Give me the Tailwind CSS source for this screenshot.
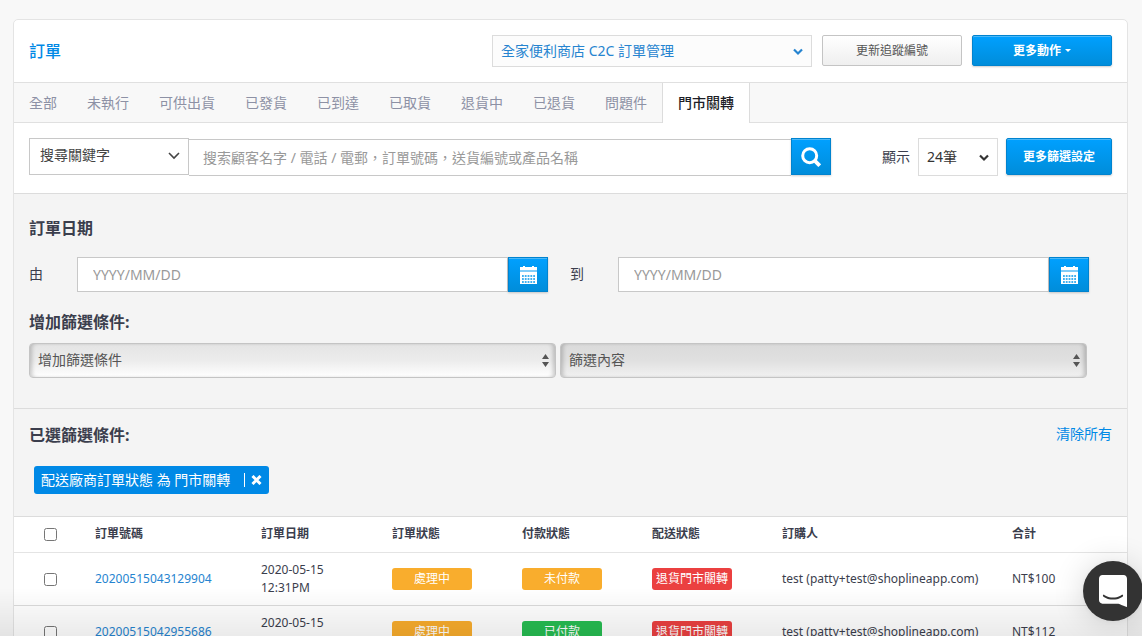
<!DOCTYPE html>
<html lang="zh-Hant">
<head>
  <meta charset="UTF-8" />
  <meta name="viewport" content="width=device-width, initial-scale=1.0"/>
  <title>訂單</title>
  <script src="https://cdn.jsdelivr.net/npm/@tailwindcss/browser@4"></script>
</head>
<body class="h-screen overflow-hidden bg-[#f8f8f8] font-['Noto_Sans','Noto_Sans_CJK_TC',sans-serif] text-sm text-[#3b3e4d]">
  <main class="ml-[13px] mr-[14px] mt-[19px] border border-[#e4e4e4] rounded-t-[5px] bg-white">

    <!-- Title bar -->
    <header class="flex items-start gap-[10px] px-[15px] py-[15px] h-[62px]">
      <h1 class="flex-1 text-base leading-8 font-medium text-[#0089e6]">訂單</h1>
      <div class="relative w-80">
        <select aria-label="訂單管理" class="appearance-none block w-full h-8 pl-2 pr-6 border border-[#dcdcdc] bg-[#fcfcfc] text-[#2684d0]">
          <option>全家便利商店 C2C 訂單管理</option>
        </select>
        <svg class="absolute right-[9px] top-[13px] pointer-events-none" width="10" height="8" viewBox="0 0 10 8" fill="none" stroke="#2684d0" stroke-width="2.2"><path d="M1 1.5 5 5.5 9 1.5"/></svg>
      </div>
      <button class="w-[140px] h-[31px] rounded-xs border border-[#c4c4c4] bg-linear-to-b from-white to-[#efefef] text-xs text-[#555]">更新追蹤編號</button>
      <button class="flex items-center justify-center gap-1 w-[140px] h-[31px] rounded-xs border border-[#0083cf] bg-linear-to-b from-[#00a0ff] to-[#008dda] shadow-[inset_0_1px_0_#4cb8f7,0_1px_2px_#0003] text-xs font-bold text-white">
        更多動作
        <svg width="6" height="3" viewBox="0 0 6 3" fill="#fff"><path d="M0 0h6L3 3z"/></svg>
      </button>
    </header>

    <!-- Status tabs -->
    <nav class="flex h-[41px] border-y border-[#e0e0e0] bg-[#f8f8f8] leading-[39px] text-[#8d91a5]">
      <a href="#" class="px-[15px]">全部</a>
      <a href="#" class="px-[15px]">未執行</a>
      <a href="#" class="px-[15px]">可供出貨</a>
      <a href="#" class="px-[15px]">已發貨</a>
      <a href="#" class="px-[15px]">已到達</a>
      <a href="#" class="px-[15px]">已取貨</a>
      <a href="#" class="px-[15px]">退貨中</a>
      <a href="#" class="px-[15px]">已退貨</a>
      <a href="#" class="px-[15px]">問題件</a>
      <a href="#" class="h-10 px-[15px] border-x border-[#dcdcdc] bg-white font-medium text-[#1c1d26]">門市關轉</a>
    </nav>

    <!-- Search -->
    <div class="flex items-start px-[15px] pt-[15px] h-[71px] border-b border-[#dcdcdc]">
      <div class="relative w-40">
        <select aria-label="搜尋範圍" class="appearance-none block w-full h-[37px] pl-[10px] pb-1 border border-[#c8c8c8] bg-white text-[#444]">
          <option>搜尋關鍵字</option>
        </select>
        <svg class="absolute right-[9px] top-[14px] pointer-events-none" width="12" height="8" viewBox="0 0 12 8" fill="none" stroke="#444" stroke-width="1.6"><path d="M1 1 6 6 11 1"/></svg>
      </div>
      <input type="search" aria-label="搜尋" placeholder="搜索顧客名字 / 電話 / 電郵，訂單號碼，送貨編號或產品名稱" class="flex-1 min-w-0 h-[37px] mt-px px-[14px] border-y border-[#c8c8c8] bg-white placeholder:text-[#999]" />
      <button aria-label="搜尋" class="flex items-center justify-center w-10 h-[37px] border border-[#0083cf] bg-linear-to-b from-[#00a0ff] to-[#008dda] shadow-[inset_0_1px_0_#4cb8f7,0_1px_2px_#0003]">
        <svg width="20" height="20" viewBox="0 0 20 20" fill="none" stroke="#fff" stroke-width="3"><circle cx="8.7" cy="8.7" r="7"/><path d="m13.700 13.700 5 5" stroke-width="3.8"/></svg>
      </button>
      <label for="per-page" class="ml-[51px] mr-2 leading-[37px]">顯示</label>
      <div class="relative w-20">
        <select id="per-page" class="appearance-none block w-full h-[38px] pl-2 border border-[#dcdcdc] bg-white text-[#333]">
          <option>24筆</option>
        </select>
        <svg class="absolute right-[9px] top-4 pointer-events-none" width="10" height="8" viewBox="0 0 10 8" fill="none" stroke="#333" stroke-width="2.2"><path d="M1 1.5 5 5.5 9 1.5"/></svg>
      </div>
      <button class="ml-2 w-[106px] h-[37px] rounded-xs border border-[#0083cf] bg-linear-to-b from-[#00a0ff] to-[#008dda] shadow-[inset_0_1px_0_#4cb8f7,0_1px_2px_#0003] text-xs font-bold text-white">更多篩選設定</button>
    </div>

    <!-- Filters -->
    <section class="px-[15px] pt-[22px] pb-[30px] border-b border-[#dcdcdc] bg-[#f4f4f4]">
      <h2 class="text-base leading-6 font-bold">訂單日期</h2>
      <div class="flex mt-[17px] mr-[23px] leading-[34px]">
        <label for="date-from" class="w-12">由</label>
        <input id="date-from" type="text" placeholder="YYYY/MM/DD" class="flex-1 min-w-0 h-[35px] px-[15px] border border-[#c8c8c8] bg-white placeholder:text-[#999]" />
        <button aria-label="選擇開始日期" class="flex items-center justify-center w-10 h-[35px] border border-[#0083cf] bg-linear-to-b from-[#00a0ff] to-[#008dda] shadow-[inset_0_1px_0_#4cb8f7,0_1px_2px_#0003]">
          <svg width="17" height="18" viewBox="0 0 17 18" fill="#fff"><path d="M0 1h3V0h2v1h7V0h2v1h3v3.500H0zM0 5.500h17V18H0z"/><path d="M2 10h13M2 13h13M2 16h13" stroke="#0096ec" stroke-width="1.600" stroke-dasharray="1.800 1"/></svg>
        </button>
        <label for="date-to" class="w-12 ml-[22px]">到</label>
        <input id="date-to" type="text" placeholder="YYYY/MM/DD" class="flex-1 min-w-0 h-[35px] px-[15px] border border-[#c8c8c8] bg-white placeholder:text-[#999]" />
        <button aria-label="選擇結束日期" class="flex items-center justify-center w-10 h-[35px] border border-[#0083cf] bg-linear-to-b from-[#00a0ff] to-[#008dda] shadow-[inset_0_1px_0_#4cb8f7,0_1px_2px_#0003]">
          <svg width="17" height="18" viewBox="0 0 17 18" fill="#fff"><path d="M0 1h3V0h2v1h7V0h2v1h3v3.500H0zM0 5.500h17V18H0z"/><path d="M2 10h13M2 13h13M2 16h13" stroke="#0096ec" stroke-width="1.600" stroke-dasharray="1.800 1"/></svg>
        </button>
      </div>
      <h2 class="mt-[18px] text-base leading-6 font-bold">增加篩選條件:</h2>
      <div class="grid grid-cols-2 gap-1 mt-[9px] mr-[25px]">
        <div class="relative">
          <select aria-label="增加篩選條件" class="appearance-none block w-full h-[35px] pl-2 pb-[2px] border border-[#c4c4c4] rounded-[4px] bg-linear-to-b from-[#e4e4e4] via-[#ececec] to-white shadow-[inset_4px_0_4px_-2px_#0003,inset_-4px_0_4px_-2px_#0003] text-[#555]">
            <option>增加篩選條件</option>
          </select>
          <svg class="absolute right-[7px] top-[11px] pointer-events-none" width="7" height="13" viewBox="0 0 7 13" fill="#555"><path d="M3.5 0 7 5H0zM0 8h7l-3.500 5z"/></svg>
        </div>
        <div class="relative">
          <select aria-label="篩選內容" class="appearance-none block w-full h-[35px] pl-2 pb-[2px] border border-[#c4c4c4] rounded-[4px] bg-linear-to-b from-[#dadada] via-[#e0e0e0] to-[#f1f1f1] shadow-[inset_4px_0_4px_-2px_#0003,inset_-4px_0_4px_-2px_#0003] text-[#555]">
            <option>篩選內容</option>
          </select>
          <svg class="absolute right-[7px] top-[11px] pointer-events-none" width="7" height="13" viewBox="0 0 7 13" fill="#555"><path d="M3.5 0 7 5H0zM0 8h7l-3.500 5z"/></svg>
        </div>
      </div>
    </section>

    <!-- Selected filters -->
    <section class="px-[15px] pt-[14px] pb-[22px] border-b border-[#dcdcdc] bg-[#f4f4f4]">
      <div class="flex justify-between">
        <h2 class="text-base leading-6 font-bold">已選篩選條件:</h2>
        <a href="#" class="leading-[22px] text-[#0089e6]">清除所有</a>
      </div>
      <div class="inline-flex items-center h-7 mt-[19px] ml-[5px] px-[7px] rounded-[3px] bg-[#0089e6] text-white align-top">
        <span>配送廠商訂單狀態 為 門市關轉</span>
        <button aria-label="移除" class="flex items-center h-[14px] ml-[14px] pl-[6px] border-l border-white">
          <svg width="11" height="10" viewBox="0 0 11 10" fill="none" stroke="#fff" stroke-width="3"><path d="m1.500 1 8 8m0-8-8 8"/></svg>
        </button>
      </div>
    </section>

    <!-- Orders -->
    <table class="w-full table-fixed text-xs leading-[18px] text-left">
      <colgroup>
        <col class="w-[66px]" />
        <col class="w-[166px]" />
        <col class="w-[131px]" />
        <col class="w-[130px]" />
        <col class="w-[130px]" />
        <col class="w-[130px]" />
        <col />
        <col class="w-[130px]" />
      </colgroup>
      <thead>
        <tr class="h-[35px] border-b border-[#e4e4e4]">
          <th class="pl-[30px]"><input type="checkbox" aria-label="全選" class="block size-[13px] mt-px" /></th>
          <th class="px-[15px]">訂單號碼</th>
          <th class="px-[15px]">訂單日期</th>
          <th class="px-[15px]">訂單狀態</th>
          <th class="px-[15px]">付款狀態</th>
          <th class="px-[15px]">配送狀態</th>
          <th class="px-[15px]">訂購人</th>
          <th class="px-[15px]">合計</th>
        </tr>
      </thead>
      <tbody id="orders"></tbody>
    </table>
  </main>

  <div class="fixed inset-x-0 bottom-0 h-12 bg-linear-to-b from-transparent to-black/8 pointer-events-none"></div>

  <!-- Chat launcher -->
  <button aria-label="開啟聊天" class="fixed -right-px bottom-[15px] flex items-center justify-center size-[60px] rounded-full bg-[#333] shadow-[0_1px_6px_#0000000f,0_2px_32px_#00000029]">
    <svg width="28" height="32" viewBox="0 0 28 32" fill="#fff"><path d="M28 32s-4.714-1.855-8.527-3.340H3.437C1.540 28.660 0 27.026 0 25.013V3.644C0 1.633 1.540 0 3.437 0h21.125C26.460 0 28 1.632 28 3.645V32zM23.861 20.018a.88.88 0 0 0-1.292-.105c-.03.026-3.015 2.681-8.570 2.681-5.486 0-8.517-2.636-8.571-2.684a.88.88 0 0 0-1.290.107 1.010 1.010 0 0 0-.219.708.992.992 0 0 0 .318.664c.142.128 3.537 3.150 9.762 3.150 6.226 0 9.621-3.022 9.763-3.150a.992.992 0 0 0 .317-.664 1.010 1.010 0 0 0-.218-.707z" fill-rule="evenodd"/></svg>
  </button>

  <script>
    const colors = {
      orange: "bg-[#f9ad2d]",
      green: "bg-[#27bd52]",
      red: "bg-[#eb4040]"
    };

    // number, date, time, order status, payment status, delivery status, customer, total
    const orders = [
      ["20200515043129904", "2020-05-15", "12:31PM", ["處理中", "orange"], ["未付款", "orange"], ["退貨門市關轉", "red"], "test (patty+test@shoplineapp.com)", "NT$100"],
      ["20200515042955686", "2020-05-15", "12:29PM", ["處理中", "orange"], ["已付款", "green"], ["退貨門市關轉", "red"], "test (patty+test@shoplineapp.com)", "NT$112"]
    ];

    function badge(item) {
      return `<span class="block w-20 h-[22px] rounded-[3px] leading-[22px] text-center text-white whitespace-nowrap ${colors[item[1]]}">${item[0]}</span>`;
    }

    document.getElementById("orders").innerHTML = orders.map(order => `
      <tr class="h-[53px] border-b border-[#dcdcdc]">
        <td class="pl-[30px]"><input type="checkbox" aria-label="${order[0]}" class="block size-[13px] mt-[2px]" /></td>
        <td class="px-[15px]"><a href="#" class="text-[#2684d0]">${order[0]}</a></td>
        <td class="px-[15px]">${order[1]}<br />${order[2]}</td>
        <td class="px-[15px]">${badge(order[3])}</td>
        <td class="px-[15px]">${badge(order[4])}</td>
        <td class="px-[15px]">${badge(order[5])}</td>
        <td class="px-[15px]">${order[6]}</td>
        <td class="px-[15px]">${order[7]}</td>
      </tr>
    `).join('');
  </script>
</body>
</html>
